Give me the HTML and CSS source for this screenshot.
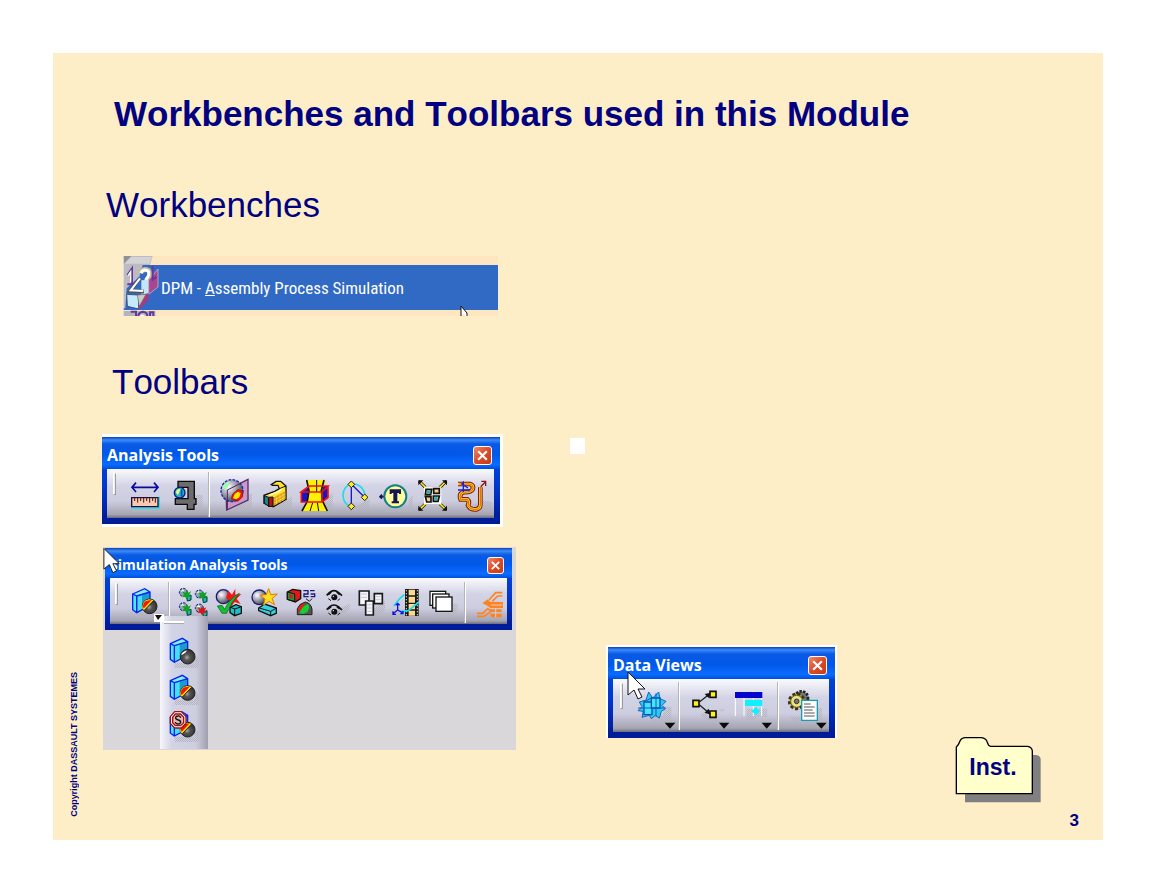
FILE: index.html
```html
<!DOCTYPE html>
<html lang="en">
<head>
    <meta charset="UTF-8">
    <meta name="viewport" content="width=device-width, initial-scale=1.0">
    <title>Workbenches and Toolbars used in this Module</title>
    <link rel="stylesheet" href="styles.css">
</head>
<body>
    <!-- shared icon parts -->
    <svg class="defs" width="0" height="0" aria-hidden="true">
        <defs>
            <radialGradient id="steel" cx="0.35" cy="0.35" r="0.7">
                <stop offset="0" stop-color="#fff"/>
                <stop offset="0.45" stop-color="#aab"/>
                <stop offset="1" stop-color="#444"/>
            </radialGradient>
            <radialGradient id="dark" cx="0.45" cy="0.55" r="0.6">
                <stop offset="0" stop-color="#aaa"/>
                <stop offset="0.35" stop-color="#555"/>
                <stop offset="1" stop-color="#2c2c2c"/>
            </radialGradient>
            <g id="block">
                <path d="M2 19L14 25V75L2 66Z" fill="#4fe6ff"/>
                <path d="M14 25L54 13V54L14 75Z" fill="#1a9ccc"/>
                <path d="M2 19L38 3L54 13L14 25Z" fill="#7ff2ff"/>
                <path d="M16 26L30 22V66L16 74Z" fill="#45ddf8"/>
                <path d="M2 19L38 3L54 13V54L14 75L2 66ZM2 19L14 25V75M14 25L54 13" fill="none" stroke="#0a22ee" stroke-width="4"/>
            </g>
            <g id="hotball">
                <circle cx="54" cy="55" r="22" fill="url(#dark)" stroke="#222" stroke-width="3"/>
                <path d="M32 62Q30 38 52 34L66 37L38 67Z" fill="#ffe600"/>
                <path d="M36 54Q38 40 54 39L37 57Z" fill="#f21800" stroke="#f21800" stroke-width="5"/>
                <path d="M38 67L66 38" stroke="#222" stroke-width="3"/>
            </g>
            <g id="speck">
                <circle cx="14" cy="12" r="12" fill="#8fa6a8" stroke="#13138a" stroke-width="3" stroke-dasharray="7 4"/>
                <path d="M6 10L12 3L17 9Z" fill="#fff"/>
                <path d="M24 24L37 20V35L26 38Z" fill="#16b6b6" stroke="#033" stroke-width="3"/>
            </g>
            <g id="burst">
                <path d="M0 -13L4 -6L13 -10L8 0L15 7L5 6L0 14L-5 6L-14 8L-8 0L-13 -10L-4 -6Z"/>
            </g>
            <g id="eye">
                <path d="M-22 2L-14 -6Q0 -18 14 -6L24 3M-17 0L-8 -8M17 0L8 -8" fill="none" stroke="#111" stroke-width="5"/>
                <circle cx="1" cy="8" r="9" fill="#111"/>
                <circle cx="-2" cy="5" r="2" fill="#fff"/>
                <path d="M-17 12L-9 18M18 12L11 18" stroke="#111" stroke-width="3"/>
            </g>
            <pattern id="dots" width="6" height="6" patternUnits="userSpaceOnUse">
                <path d="M0 0H3V3H0ZM3 3H6V6H3Z" fill="#b4b4be"/>
            </pattern>
            <g id="cursor">
                <path d="M1 1V24L7 19L11 28L15 26L11 18H18Z" fill="#fff" stroke="#111" stroke-width="1"/>
            </g>
        </defs>
    </svg>

    <main class="slide">
        <div class="rail"><p class="copyright">Copyright DASSAULT SYSTEMES</p></div>
        <div class="content">
            <h1>Workbenches and Toolbars used in this Module</h1>

            <h2 class="workbenches-title">Workbenches</h2>
            <div class="menu">
                <button type="button" class="menu-item">DPM - <u>A</u>ssembly Process Simulation</button>
                <svg class="menu-icon" viewBox="69 33 108 180" width="36" height="60" aria-hidden="true">
                    <path d="M69 33H158L150 60H128L118 95L80 130L76 190H69Z" fill="#bcbcc0"/>
                    <path d="M69 33H94L70 58Z" fill="#909098"/>
                    <path d="M94 36L156 36L148 56H74Z" fill="#d4d4d6"/>
                    <path d="M82 90L96 70V116M82 118H104" fill="none" stroke="#63399f" stroke-width="6"/>
                    <path d="M84 92L92 80V112" fill="none" stroke="#fff" stroke-width="4"/>
                    <path d="M122 84Q130 68 146 76Q156 88 140 104" fill="none" stroke="#c9b98d" stroke-width="14"/>
                    <path d="M122 84Q130 70 144 78Q152 88 136 106" fill="none" stroke="#fff" stroke-width="9"/>
                    <path d="M124 106L146 104V146L124 150Z" fill="#c2e6f6"/>
                    <path d="M146 104L158 92L174 72V126L146 148Z" fill="#a8468f" stroke="#dcc6d8" stroke-width="2"/>
                    <path d="M158 62V104L170 96" fill="none" stroke="#63399f" stroke-width="6"/>
                    <path d="M120 100L90 138L132 140" fill="none" stroke="#555" stroke-width="11"/>
                    <path d="M120 100L92 136L130 138" fill="none" stroke="#fff" stroke-width="6"/>
                    <path d="M80 148L116 150V192L82 184Z" fill="#c6eafa" stroke="#3a4f87" stroke-width="3"/>
                    <path d="M116 152L146 144V166L116 194Z" fill="#a53b87"/>
                    <path d="M112 150L138 148L118 184Z" fill="#ccc" stroke="#666" stroke-width="2"/>
                    <path d="M69 198H166V213H69Z" fill="#b6b3ba"/>
                    <path d="M92 200H108V213M114 213Q118 200 130 200Q142 202 142 213M150 213V202H160V213" fill="none" stroke="#63399f" stroke-width="6"/>
                    <path d="M120 213Q124 204 136 213Z" fill="#fff"/>
                    <path d="M69 33H71V213H69Z" fill="#eef"/>
                </svg>
                <svg class="menu-cursor" viewBox="0 0 10 10" width="10" height="10" aria-hidden="true">
                    <path d="M1 0L7 8V10H5L4 8L1 10Z" fill="#fff"/>
                    <path d="M1 0V10M1 0L7 7V10" fill="none" stroke="#111" stroke-width="1"/>
                </svg>
            </div>

            <h2 class="toolbars-title">Toolbars</h2>
            <div class="tools">
                <div class="stack">
                    <section class="window analysis">
                        <header class="titlebar">
                            <h3>Analysis Tools</h3>
                            <button type="button" class="close" aria-label="Close Analysis Tools"><svg viewBox="0 0 12 12"><path d="M2 2L10 10M10 2L2 10"/></svg></button>
                        </header>
                        <div class="toolbar">
                            <span class="grip"></span>
                            <button type="button" class="tool" aria-label="Measure Between">
                                <svg viewBox="87 138 108 108">
                                    <path d="M104 236H198V248H104Z" fill="url(#dots)"/>
                                    <path d="M104 172H178M114 158L102 172L114 186M168 158L180 172L168 186" fill="none" stroke="#0c0c9c" stroke-width="5"/>
                                    <path d="M100 234H184V200" fill="none" stroke="#22e0f0" stroke-width="4"/>
                                    <path d="M101 203H180V230H101Z" fill="#fcc9b0" stroke="#1c1040" stroke-width="4"/>
                                    <path d="M110 203V213M119 203V218M128 203V213M137 203V218M146 203V213M155 203V218M164 203V213M172 203V218" stroke="#401818" stroke-width="3"/>
                                </svg>
                            </button>
                            <button type="button" class="tool" aria-label="Measure Item">
                                <svg viewBox="207 138 108 108">
                                    <path d="M292 195H314V240H250V228H292Z" fill="url(#dots)"/>
                                    <path d="M240 154H289V206H294V223H288V238H268V223H232V206H270V172H240Z" fill="#6c6c6e" stroke="#0a0a0a" stroke-width="4"/>
                                    <circle cx="245" cy="188" r="16" fill="#18b4c8" stroke="#15157a" stroke-width="4"/>
                                    <path d="M234 188Q234 176 248 176L240 196Z" fill="#e9ff7a"/>
                                    <path d="M251 178V199" stroke="#1748c0" stroke-width="5"/>
                                </svg>
                            </button>
                            <span class="sep"></span>
                            <button type="button" class="tool" aria-label="Clash">
                                <svg viewBox="357 138 108 108">
                                    <path d="M410 220L462 190V240L400 246Z" fill="url(#dots)"/>
                                    <path d="M384 182L450 148V210L386 240Z" fill="#c79ac8" stroke="#5b2c6c" stroke-width="4"/>
                                    <circle cx="402" cy="182" r="33" fill="url(#steel)" stroke="#2222b0" stroke-width="4" stroke-dasharray="8 4"/>
                                    <path d="M372 176Q376 158 396 154L386 176Z" fill="#9dffb0"/>
                                    <path d="M388 240V180L428 160" fill="none" stroke="#4a2458" stroke-width="3"/>
                                    <path d="M400 206L404 192L420 178L434 184V200L420 214Z" fill="#f21600" stroke="#8a1010" stroke-width="2"/>
                                    <path d="M405 205L410 192L420 185L428 190L424 202L414 208Z" fill="#ffe400"/>
                                </svg>
                            </button>
                            <button type="button" class="tool" aria-label="Sectioning">
                                <svg viewBox="477 138 108 108">
                                    <path d="M530 224L582 200V234L510 244Z" fill="url(#dots)"/>
                                    <path d="M520 164L534 154H548L564 168V208L526 230L498 220V196L530 184L544 176L540 166H524Z" fill="#ffe12e" stroke="#111" stroke-width="4"/>
                                    <path d="M526 203L562 184V208L526 228Z" fill="#e09a10"/>
                                    <path d="M528 210L562 192M528 219L562 201M536 200V223M546 194V218M555 190V213" stroke="#ffe95a" stroke-width="2"/>
                                    <path d="M499 197L512 202V229L499 220Z" fill="#0c8a88" stroke="#111" stroke-width="3"/>
                                    <path d="M512 202L525 201V228L512 230Z" fill="#b01414" stroke="#111" stroke-width="3"/>
                                    <path d="M514 196L544 184L552 174" fill="none" stroke="#fffbc0" stroke-width="5"/>
                                    <path d="M544 176L564 168" stroke="#111" stroke-width="3"/>
                                </svg>
                            </button>
                            <button type="button" class="tool" aria-label="Distance and Band Analysis">
                                <svg viewBox="-9 138 108 108">
                                    <path d="M60 210L98 190V240H50Z" fill="url(#dots)"/>
                                    <path d="M4 184L26 168H84V204L66 216H4Z" fill="#1616c8"/>
                                    <path d="M18 150H76L66 184L70 216L84 243H6L22 212L26 180Z" fill="#fff200"/>
                                    <path d="M20 150L27 182L22 214L6 243M72 150L64 182L68 214L82 243" fill="none" stroke="#111" stroke-width="5"/>
                                    <path d="M50 150V186M38 218L30 243M52 218L56 243" stroke="#111" stroke-width="3"/>
                                    <path d="M4 186L28 168H84L66 186ZM4 186V216H66V186M66 216L84 202V168" fill="none" stroke="#f01010" stroke-width="5"/>
                                </svg>
                            </button>
                            <button type="button" class="tool" aria-label="Arc through Three Points">
                                <svg viewBox="111 138 108 108">
                                    <path d="M168 228L208 206V240H160Z" fill="url(#dots)"/>
                                    <path d="M154 162Q130 168 129 196Q130 224 154 230M154 162Q190 160 196 200" fill="none" stroke="#20dce8" stroke-width="5"/>
                                    <path d="M154 164V228M156 164L192 200" stroke="#1818d0" stroke-width="4"/>
                                    <path d="M154 153L164 163L154 173L144 163ZM194 192L204 202L194 212L184 202ZM154 219L164 229L154 239L144 229Z" fill="#ffee20" stroke="#222" stroke-width="3"/>
                                </svg>
                            </button>
                            <button type="button" class="tool" aria-label="Annotation">
                                <svg viewBox="231 138 108 108">
                                    <path d="M260 228H326V206L338 196V246H250Z" fill="url(#dots)"/>
                                    <path d="M241 200H254M246 194L240 200L246 206" fill="none" stroke="#14145c" stroke-width="5"/>
                                    <circle cx="286" cy="199" r="33" fill="#fffca0" stroke="#158080" stroke-width="6"/>
                                    <path d="M269 178H303V192H297V189H292V214H297V220H275V214H280V189H275V192H269Z" fill="#16164e"/>
                                </svg>
                            </button>
                            <button type="button" class="tool" aria-label="Explode">
                                <svg viewBox="351 138 108 108">
                                    <path d="M357 153L376 172M439 153L420 172M357 240L376 222M439 240L420 222" stroke="#111" stroke-width="9"/>
                                    <path d="M357 153L380 176M439 153L416 176M357 240L380 218M439 240L416 218" stroke="#ffe81c" stroke-width="5"/>
                                    <path d="M355 151H370L355 166ZM441 151H426L441 166ZM355 242H370L355 227ZM441 242H426L441 227Z" fill="#111"/>
                                    <path d="M372 172H424V222H372Z" fill="#fff"/>
                                    <path d="M378 178H395L392 194H376ZM401 176H418V190H401ZM376 200H393V216H380ZM400 198H418L414 214H400Z" fill="#fcc890" stroke="#111" stroke-width="5"/>
                                    <path d="M381 182H391V191H381ZM403 201H412V211H403Z" fill="#18b8b8"/>
                                </svg>
                            </button>
                            <button type="button" class="tool" aria-label="Swept Path">
                                <svg viewBox="471 138 108 108">
                                    <path d="M500 236L548 210L576 216V236Z" fill="url(#dots)"/>
                                    <path d="M474 162H510Q522 166 518 178Q512 188 490 186Q476 192 482 208H502Q510 214 504 226Q510 240 530 238Q542 234 541 222V172" fill="none" stroke="#8c1515" stroke-width="14"/>
                                    <path d="M474 162H510Q522 166 518 178Q512 188 490 186Q476 192 482 208H502Q510 214 504 226Q510 240 530 238Q542 234 541 222V172" fill="none" stroke="#ffd21c" stroke-width="8"/>
                                    <path d="M478 162H510Q522 166 518 178Q512 188 490 186Q476 192 482 208H502Q510 214 504 226Q510 240 530 238Q542 234 541 222V172" fill="none" stroke="#b03018" stroke-width="2"/>
                                    <path d="M474 180H510M490 154V186M484 160L504 174" stroke="#1720dc" stroke-width="4"/>
                                    <path d="M542 170L556 156M544 154H557V168" fill="none" stroke="#8c1515" stroke-width="4"/>
                                </svg>
                            </button>
                        </div>
                    </section>

                    <div class="desktop">
                        <section class="window simulation">
                            <header class="titlebar">
                                <h3>Simulation Analysis Tools</h3>
                                <button type="button" class="close" aria-label="Close Simulation Analysis Tools"><svg viewBox="0 0 12 12"><path d="M2 2L10 10M10 2L2 10"/></svg></button>
                            </header>
                            <div class="toolbar">
                                <span class="grip"></span>
                                <button type="button" class="tool" aria-label="Clash Mode">
                                    <svg viewBox="93 132 96 96">
                                        <path d="M116 210H150V228H116Z" fill="url(#dots)"/>
                                        <use href="#block" x="102" y="137"/>
                                        <use href="#hotball" x="101" y="138"/>
                                    </svg>
                                </button>
                                <span class="sep"></span>
                                <button type="button" class="tool" aria-label="Analysis Configuration">
                                    <svg viewBox="234 132 96 96">
                                        <use href="#speck" x="242" y="139"/>
                                        <use href="#speck" x="290" y="144"/>
                                        <use href="#speck" x="242" y="182"/>
                                        <use href="#speck" x="290" y="186"/>
                                        <g fill="#12a028"><use href="#burst" x="266" y="158"/><use href="#burst" x="314" y="160"/><use href="#burst" x="266" y="200"/></g>
                                        <use href="#burst" x="312" y="206" fill="#e01414"/>
                                    </svg>
                                </button>
                                <button type="button" class="tool" aria-label="Check Clash">
                                    <svg viewBox="342 132 96 96">
                                        <path d="M378 216H436V228H378Z" fill="url(#dots)"/>
                                        <circle cx="376" cy="164" r="21" fill="url(#steel)" stroke="#1c1c6c" stroke-width="4"/>
                                        <path d="M396 196L414 188L430 194V214L410 221L396 212Z" fill="#1cc0c8" stroke="#111" stroke-width="4"/>
                                        <path d="M410 200V220M398 196L410 201L428 195" fill="none" stroke="#111" stroke-width="3"/>
                                        <path d="M390 146L402 158L412 140L412 158L430 156L416 170L428 186L410 180L398 196L396 176L384 168Z" fill="#ee1818"/>
                                        <path d="M358 192L372 190L380 202Q394 170 424 154Q400 180 386 214H372Z" fill="#10c030" stroke="#0b5a1c" stroke-width="2"/>
                                    </svg>
                                </button>
                                <button type="button" class="tool" aria-label="New Clash">
                                    <svg viewBox="450 132 96 96">
                                        <path d="M484 212L520 222H544V228H484Z" fill="url(#dots)"/>
                                        <circle cx="484" cy="166" r="22" fill="url(#steel)" stroke="#1c1c6c" stroke-width="4"/>
                                        <path d="M482 198L500 186L535 198V214L518 221L482 206Z" fill="#35d0e0" stroke="#111" stroke-width="4"/>
                                        <path d="M484 198L518 208L534 199M518 208V220" fill="none" stroke="#111" stroke-width="3"/>
                                        <path d="M512 140L518 158L538 156L522 170L530 188L513 178L496 190L501 171L486 160L505 158Z" fill="#ffe020" stroke="#e07a00" stroke-width="3"/>
                                    </svg>
                                </button>
                                <button type="button" class="tool" aria-label="Compare">
                                    <svg viewBox="558 132 96 96">
                                        <path d="M568 150L584 142L608 146V170L592 180L568 172Z" fill="#e01818" stroke="#111" stroke-width="4"/>
                                        <path d="M568 150L590 156V178L568 172Z" fill="#14a038" stroke="#111" stroke-width="3"/>
                                        <path d="M574 156L584 159V170L574 167Z" fill="#e01818"/>
                                        <path d="M616 146H630V156H618V164H632M636 146H650M638 156H650V164H638" fill="none" stroke="#1a1a7a" stroke-width="4"/>
                                        <path d="M624 170L634 178M642 170L634 178" stroke="#111" stroke-width="3"/>
                                        <path d="M598 218V200Q604 184 622 180Q640 184 642 202V218Z" fill="#555" stroke="#222" stroke-width="3"/>
                                        <path d="M600 200Q606 186 622 182L604 212Z" fill="#f01818"/>
                                        <path d="M604 214Q612 192 630 186Q638 194 628 210L616 216Z" fill="#12d030"/>
                                    </svg>
                                </button>
                                <button type="button" class="tool" aria-label="Visualization">
                                    <svg viewBox="45 132 96 96">
                                        <path d="M104 200L134 184V200L104 228H84Z" fill="url(#dots)"/>
                                        <use href="#eye" x="87" y="158"/>
                                        <use href="#eye" x="87" y="201"/>
                                    </svg>
                                </button>
                                <button type="button" class="tool" aria-label="Pages">
                                    <svg viewBox="153 132 96 96">
                                        <path d="M206 200L240 176V204L206 228Z" fill="url(#dots)"/>
                                        <path d="M163 147H192V189H163ZM208 155H232V185H208Z" fill="#f4f4fa" stroke="#1a1a1a" stroke-width="5"/>
                                        <path d="M182 177H205V219H182Z" fill="#f4f4fa" stroke="#1a1a1a" stroke-width="5"/>
                                        <path d="M168 156H186M168 166H186M213 164H227M213 173H227M187 188H200M187 198H200M187 208H200" stroke="#c4c4d4" stroke-width="3"/>
                                    </svg>
                                </button>
                                <button type="button" class="tool" aria-label="Trace">
                                    <svg viewBox="261 132 96 96">
                                        <path d="M300 141H341V222H300Z" fill="#181818"/>
                                        <path d="M311 143H330V160H311ZM311 164H330V182H311ZM311 186H330V202H311ZM311 206H330V221H311Z" fill="#ffd890"/>
                                        <path d="M304 144V222M337 144V222" stroke="#e8e0c8" stroke-width="3" stroke-dasharray="4 5"/>
                                        <path d="M298 158L284 170L266 192M286 208L310 206L342 180" fill="none" stroke="#18dcf0" stroke-width="5"/>
                                        <path d="M278 186V204L266 214M278 204L292 212M272 190L278 184L284 190M264 208V217H273M286 215H294V207" fill="none" stroke="#1010e0" stroke-width="4"/>
                                    </svg>
                                </button>
                                <button type="button" class="tool" aria-label="Snapshots">
                                    <svg viewBox="369 132 96 96">
                                        <path d="M388 214H444V186H458V204L440 228H388Z" fill="url(#dots)"/>
                                        <g fill="#fff" stroke="#151515" stroke-width="4">
                                            <rect x="375" y="148" width="47" height="42"/>
                                            <rect x="383" y="156" width="49" height="42"/>
                                            <rect x="393" y="165" width="48" height="43"/>
                                        </g>
                                    </svg>
                                </button>
                                <span class="sep"></span>
                                <button type="button" class="tool" aria-label="Ergonomics">
                                    <svg viewBox="507 132 96 96">
                                        <path d="M592 152H572L552 174M592 162H578L562 178M516 214H534L548 200L556 206M516 223H536L556 210" fill="none" stroke="#ff8420" stroke-width="5"/>
                                        <path d="M532 184L548 172L556 180H594V198H556L548 192Z" fill="#ff8420"/>
                                        <path d="M554 202H590V210H554ZM554 215H590V226H560Z" fill="#ff8420"/>
                                        <path d="M558 189H592M572 200V226" stroke="#ddd0d4" stroke-width="3"/>
                                    </svg>
                                </button>
                            </div>
                        </section>
                        <div class="flyout">
                            <span class="handle"></span>
                            <button type="button" class="tool" aria-label="Clash Off">
                                <svg viewBox="204 108 108 96">
                                    <path d="M230 188H290V172H302V204H230Z" fill="url(#dots)"/>
                                    <use href="#block" x="215" y="112"/>
                                    <circle cx="269" cy="170" r="22" fill="url(#dark)" stroke="#222" stroke-width="3"/>
                                    <path d="M248 168Q250 152 270 150L262 160Z" fill="#fff" stroke="#222" stroke-width="2"/>
                                </svg>
                            </button>
                            <button type="button" class="tool" aria-label="Clash On">
                                <svg viewBox="204 219 108 96">
                                    <path d="M230 299H290V283H302V315H230Z" fill="url(#dots)"/>
                                    <use href="#block" x="215" y="223"/>
                                    <use href="#hotball" x="215" y="224"/>
                                </svg>
                            </button>
                            <button type="button" class="tool" aria-label="Clash Stop">
                                <svg viewBox="204 330 108 96">
                                    <path d="M230 410H290V394H302V426H230Z" fill="url(#dots)"/>
                                    <use href="#block" x="215" y="333"/>
                                    <use href="#hotball" x="215" y="334"/>
                                    <path d="M230 335H250L264 350V370L250 384H230L217 370V350Z" fill="#fff" stroke="#9c1414" stroke-width="4"/>
                                    <path d="M232 342H248L257 352V368L248 377H232L224 368V352Z" fill="#e6b8b0" stroke="#9c1414" stroke-width="4"/>
                                    <path d="M248 353Q246 347 240 348Q232 349 233 355Q235 359 241 360Q249 362 248 367Q246 373 240 372Q233 372 232 366" fill="none" stroke="#111" stroke-width="4"/>
                                </svg>
                            </button>
                        </div>
                        <svg class="menu-arrow" viewBox="0 0 10 8" width="10" height="8" aria-hidden="true"><path d="M0 0H10V8H0Z" fill="#fff"/><path d="M1 1H8L4 6Z" fill="#111"/></svg>
                        <svg class="cursor" viewBox="0 0 20 30" width="18" height="28" aria-hidden="true"><use href="#cursor"/></svg>
                    </div>
                </div>

                <div class="side">
                    <div class="bullet"></div>
                    <section class="window data-views">
                        <header class="titlebar">
                            <h3>Data Views</h3>
                            <button type="button" class="close" aria-label="Close Data Views"><svg viewBox="0 0 12 12"><path d="M2 2L10 10M10 2L2 10"/></svg></button>
                        </header>
                        <div class="toolbar">
                            <span class="grip"></span>
                            <button type="button" class="tool" aria-label="3D View">
                                <svg viewBox="108 138 120 132">
                                    <path d="M150 226H190V200H214V244L200 250H160Z" fill="url(#dots)"/>
                                    <path d="M146 156L158 174L176 156L180 176L198 184L186 196L196 206L184 214L178 234L166 226L154 236L148 226L126 232L130 214L114 212L126 200L118 186L138 180Z" fill="#30c8ee" stroke="#1068c0" stroke-width="3"/>
                                    <path d="M132 186H156V224H132Z" fill="#45e4ff" stroke="#0d50b8" stroke-width="4"/>
                                    <path d="M154 174H180V204H154Z" fill="#45e4ff" stroke="#0d50b8" stroke-width="4"/>
                                    <path d="M114 204H196M168 160V230M132 186L154 174" fill="none" stroke="#0d60c0" stroke-width="3"/>
                                    <path d="M194 248H226L210 266Z" fill="#0a0a0a"/>
                                </svg>
                            </button>
                            <span class="sep"></span>
                            <button type="button" class="tool" aria-label="PERT Chart">
                                <svg viewBox="270 138 120 132">
                                    <path d="M300 226L322 206V234H350V246L322 240ZM358 208H376L366 216Z" fill="url(#dots)"/>
                                    <path d="M298 186L326 164M298 194L326 218" stroke="#222" stroke-width="4"/>
                                    <path d="M314 162L332 158L326 174ZM314 218L332 224L326 206Z" fill="#111"/>
                                    <path d="M279 181H297V200H279ZM330 154H348V172H330ZM330 213H348V232H330Z" fill="#fff21c" stroke="#111" stroke-width="5"/>
                                    <path d="M357 248H388L372 266Z" fill="#0a0a0a"/>
                                </svg>
                            </button>
                            <button type="button" class="tool" aria-label="Gantt Chart">
                                <svg viewBox="396 138 120 132">
                                    <path d="M440 206H502V230H474L460 240H440Z" fill="url(#dots)"/>
                                    <path d="M406 154V228M432 154V228M460 154V228M485 154V228" stroke="#fff" stroke-width="3"/>
                                    <path d="M405 156H487V174H405Z" fill="#0505cc"/>
                                    <path d="M435 180H487V198H435Z" fill="#10f0ff"/>
                                    <path d="M468 201L480 213L468 225L454 213Z" fill="#10f0ff"/>
                                    <path d="M485 248H516L500 266Z" fill="#0a0a0a"/>
                                </svg>
                            </button>
                            <span class="sep"></span>
                            <button type="button" class="tool" aria-label="Process Report">
                                <svg viewBox="561 138 120 132">
                                    <path d="M570 230H606V244H652V204H666V252H590Z" fill="url(#dots)"/>
                                    <circle cx="604" cy="174" r="20" fill="#777" stroke="#222" stroke-width="8" stroke-dasharray="7 4"/>
                                    <circle cx="590" cy="184" r="22" fill="#b0a050" stroke="#3a3614" stroke-width="9" stroke-dasharray="9 6"/>
                                    <circle cx="590" cy="184" r="18" fill="#ece080" stroke="#6a6020" stroke-width="3"/>
                                    <circle cx="590" cy="184" r="7" fill="#777" stroke="#333" stroke-width="3"/>
                                    <path d="M605 181H652V241H605Z" fill="#fff" stroke="#1a9cb4" stroke-width="4"/>
                                    <path d="M612 192H632M612 201H644M612 210H638M612 219H644M612 228H644" stroke="#555" stroke-width="3"/>
                                    <path d="M648 248H680L664 266Z" fill="#0a0a0a"/>
                                </svg>
                            </button>
                        </div>
                        <svg class="cursor" viewBox="0 0 20 30" width="20" height="30" aria-hidden="true"><use href="#cursor"/></svg>
                    </section>
                </div>

                <div class="corner">
                    <button type="button" class="folder">
                        <svg viewBox="45 36 258 198" aria-hidden="true">
                            <path d="M75 90H288Q302 92 302 104V232H75Z" fill="#808080"/>
                            <path d="M49 206V66Q56 60 60 48Q65 38 76 38H124Q138 39 142 52Q145 63 152 64H262Q276 66 277 78V206Z" fill="#ffffcc" stroke="#000" stroke-width="4"/>
                        </svg>
                        <span>Inst.</span>
                    </button>
                    <p class="page-number">3</p>
                </div>
            </div>
        </div>
    </main>
</body>
</html>
```
FILE: styles.css
```css
* {
    box-sizing: border-box;
}
body {
    margin: 0;
    padding: 53px 52px 53px 53px;
    min-height: 100vh;
    display: flex;
    background-color: #fff;
    color: #000080;
    font-family: "Liberation Sans", Arial, sans-serif;
    font-kerning: none;
}
h1, h2, h3, p {
    margin: 0;
}
button {
    border: 0;
    padding: 0;
    background: none;
    color: inherit;
    font-family: inherit;
    cursor: pointer;
}
svg {
    display: block;
}
.defs {
    position: absolute;
}

/* slide */
.slide {
    flex: 1;
    display: flex;
    background-color: #fdeec8;
}
.rail {
    width: 49px;
    display: flex;
    align-items: flex-end;
    padding: 0 0 23px 16px;
}
.copyright {
    writing-mode: vertical-rl;
    transform: rotate(180deg);
    font-size: 9px;
    line-height: 10px;
    font-weight: bold;
    white-space: nowrap;
}
.content {
    flex: 1;
    display: flex;
    flex-direction: column;
    padding: 41px 24px 9px 0;
}
h1 {
    padding-left: 12px;
    font-size: 35px;
    line-height: 40px;
}
h2 {
    font-size: 35px;
    line-height: 40px;
    font-weight: normal;
}
.workbenches-title {
    margin-top: 51px;
    padding-left: 4px;
}
.toolbars-title {
    margin: 46px 0 32px;
    padding-left: 10px;
}

/* workbench menu entry */
.menu {
    position: relative;
    width: 375px;
    margin: 31px 0 0 21px;
    padding: 9px 0 6px;
    background-color: #fee6c1;
}
.menu-item {
    display: block;
    width: 100%;
    height: 45px;
    padding-left: 38px;
    background-color: #316ac5;
    color: #fff;
    font-family: "Roboto Condensed", Roboto, sans-serif;
    font-size: 17px;
    text-align: left;
    white-space: nowrap;
}
.menu-icon {
    position: absolute;
    top: 0;
    left: 0;
}
.menu-cursor {
    position: absolute;
    right: 28px;
    bottom: 0;
}

/* floating toolbars */
.tools {
    flex: 1;
    display: flex;
}
.stack {
    margin-right: 54px;
}
.window {
    width: max-content;
    border: solid #0a2fc4;
    border-width: 0 6px 6px 5px;
    background-color: #0058e8;
    border-image: linear-gradient(to bottom, #0a50dd 0%, #0038d0 60%, #001c98 100%) 1;
}
.titlebar {
    display: flex;
    align-items: center;
    justify-content: space-between;
    height: 32px;
    margin: 0 -6px 0 -5px;
    padding: 4px 8px 0 5px;
    background: linear-gradient(to bottom, #1040b8 0, #3a8cf8 3px, #0a5ae4 7px, #0058e8 55%, #0a6cff 85%, #0050dc 100%);
    color: #fff;
}
.titlebar h3 {
    font-family: "Open Sans", "Noto Sans", sans-serif;
    font-size: 16px;
    line-height: 20px;
}
.close {
    width: 19px;
    height: 19px;
    padding: 2px;
    border: 1px solid #fff;
    border-radius: 3px;
    background: linear-gradient(135deg, #ee8a6c, #dd4a28 50%, #c83c14);
}
.close path {
    fill: none;
    stroke: #fff;
    stroke-width: 2;
}
.toolbar {
    display: flex;
    gap: 4px;
    padding: 7px 1px 6px 6px;
    background: linear-gradient(to bottom, #fafafd 0, #d3d3e6 35%, #cdcde0 65%, #a4a4b2 93%, #6c6c7c 100%);
}
.tool {
    flex: none;
}
.tool svg {
    width: 36px;
    height: 36px;
}
.grip {
    width: 3px;
    height: 22px;
    margin: -3px 7px 0 0;
    border: 1px solid #fff;
    border-right-color: #9c9c9c;
    border-bottom-color: #9c9c9c;
    background-color: #eee;
}
.sep {
    width: 2px;
    margin: -4px 3px -5px 1px;
    border-left: 1px solid #b4b4b4;
    background-color: #fff;
}
.analysis {
    outline: 3px solid #fff;
    margin-top: 3px;
    clip-path: inset(-3px -3px -3px 0);
}

/* simulation toolbar on its desktop */
.desktop {
    position: relative;
    min-height: 203px;
    margin: 23px 0 0 1px;
    padding: 1px 4px 0 2px;
    background-color: #dad7da;
}
.simulation {
    border-right-width: 5px;
}
.simulation .titlebar {
    height: 30px;
    margin-right: -5px;
    padding-left: 5px;
}
.simulation h3 {
    font-size: 14px;
}
.simulation .close {
    width: 17px;
    height: 17px;
}
.simulation .toolbar {
    padding: 8px 1px 6px 5px;
}
.simulation .tool svg {
    width: 32px;
    height: 32px;
}
.simulation .sep {
    margin-left: 3px;
    margin-right: 2px;
}
.simulation .tool + .tool + .sep {
    margin-left: 0;
    margin-right: 4px;
}
.flyout {
    position: absolute;
    top: 69px;
    left: 57px;
    width: 48px;
    display: flex;
    flex-direction: column;
    align-items: center;
    gap: 5px;
    padding: 5px 0 7px;
    background: linear-gradient(to right, #f6f6fb 0, #d3d3e6 25%, #cdcde0 75%, #9f9faf 100%);
}
.flyout .tool svg {
    height: 32px;
}
.handle {
    align-self: flex-start;
    width: 20px;
    height: 3px;
    margin: 0 0 7px 4px;
    background-color: #fff;
    border-bottom: 1px solid #aaa;
}
.menu-arrow {
    position: absolute;
    top: 67px;
    left: 51px;
}
.desktop > .cursor {
    position: absolute;
    top: 0;
    left: 0;
}

/* right side */
.side {
    padding-top: 4px;
}
.bullet {
    width: 15px;
    height: 16px;
    background-color: #fff;
}
.data-views {
    position: relative;
    margin: 193px 0 0 38px;
    outline: 2px solid #fff;
    clip-path: inset(-2px -2px 0 -2px);
}
.data-views .toolbar {
    gap: 2px;
    padding: 7px 2px 2px 7px;
}
.data-views .tool svg {
    width: 40px;
    height: 44px;
}
.data-views .grip {
    height: 26px;
    margin-right: 11px;
}
.data-views .sep {
    margin: -4px 8px 0 0;
}
.data-views .tool + .tool + .sep {
    margin-left: 3px;
    margin-right: 6px;
}
.data-views .cursor {
    position: absolute;
    top: 24px;
    left: 14px;
}
.corner {
    margin-left: auto;
    display: flex;
    flex-direction: column;
    justify-content: flex-end;
    align-items: flex-end;
}
.folder {
    position: relative;
    width: 86px;
    height: 66px;
    margin: 0 38px 8px 0;
    padding: 0 10px 6px 0;
    font-size: 23px;
    font-weight: bold;
}
.folder svg {
    position: absolute;
    top: 0;
    left: 0;
    width: 86px;
    height: 66px;
}
.folder span {
    position: relative;
}
.page-number {
    font-size: 17px;
    line-height: 20px;
    font-weight: bold;
}
```
